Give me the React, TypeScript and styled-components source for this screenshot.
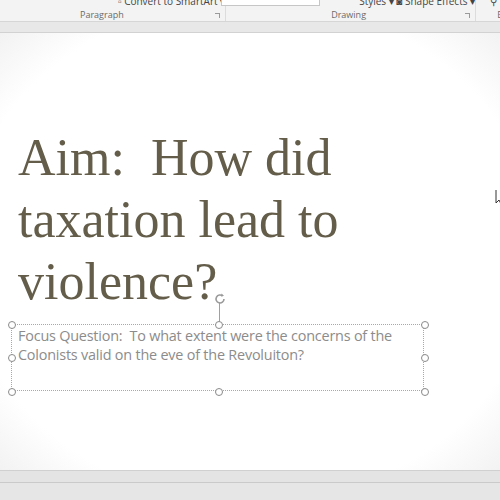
import React from 'react';
import styled, { createGlobalStyle } from 'styled-components';

const GlobalStyle = createGlobalStyle`
    html, body {
        margin: 0;
        padding: 0;
        width: 500px;
        height: 500px;
        overflow: hidden;
        background: #e6e6e6;
    }
`;

const Screen = styled.div`
    width: 500px;
    height: 500px;
    display: grid;
    grid-template-rows: 22px 11px 1fr 13px 17px;
    font-family: 'Open Sans', 'Liberation Sans', sans-serif;
`;

const Ribbon = styled.div`
    display: flex;
    background: #f3f3f3;
    border-bottom: 1px solid #d6d6d6;
    overflow: hidden;
`;

const RibbonGroup = styled.div<{ $width: number; $pad: number }>`
    flex: 0 0 ${(p) => p.$width}px;
    display: flex;
    flex-direction: column;
    justify-content: space-between;
    padding-left: ${(p) => p.$pad}px;
    box-sizing: border-box;
    border-right: 1px solid #dcdcdc;
`;

const ToolRow = styled.div`
    display: flex;
    align-items: flex-start;
    gap: 6px;
    height: 6px;
    margin-top: -2px;
    font-size: 10px;
    line-height: 6px;
    color: #444;
    white-space: nowrap;
`;

const Gallery = styled.div`
    width: 97px;
    height: 7px;
    margin-top: -1px;
    margin-left: -110px;
    margin-right: 33px;
    background: #fff;
    border: 1px solid #c6c6c6;
`;

const LabelRow = styled.div`
    display: flex;
    align-items: center;
    justify-content: space-between;
    height: 12px;
    padding: 0 5px 1px 0;
    font-size: 9px;
    color: #6a6a6a;
    white-space: nowrap;
`;

const Launcher = styled.span`
    width: 4px;
    height: 4px;
    border-top: 1px solid #9a9a9a;
    border-right: 1px solid #9a9a9a;
    margin-top: 2px;
`;

const RibbonGap = styled.div`
    background: #e8e8e8;
    border-bottom: 1px solid #d2d2d2;
`;

const Slide = styled.div`
    position: relative;
    display: flex;
    flex-direction: column;
    align-items: flex-start;
    background: radial-gradient(ellipse 72% 72% at 50% 50%, #ffffff 80%, #f1f1f1 100%);
    overflow: hidden;
`;

const Title = styled.h1`
    margin: 0;
    padding: 94px 0 0 18px;
    font-family: 'Liberation Serif', 'DejaVu Serif', serif;
    font-weight: normal;
    font-size: 52px;
    line-height: 62px;
    color: #635d4a;
`;

const TextBox = styled.div`
    position: relative;
    margin: 11px 0 0 11px;
    width: 413px;
    height: 67px;
    border: 1px dotted #a8a8a8;
    box-sizing: border-box;
`;

const FocusText = styled.p`
    margin: 0;
    padding: 1px 0 0 6px;
    font-family: 'Open Sans', 'Liberation Sans', sans-serif;
    font-size: 14.4px;
    line-height: 19px;
    color: #8c8c8c;
    letter-spacing: -0.2px;
`;

const Handle = styled.div<{ $x: number; $y: number }>`
    position: absolute;
    left: ${(p) => p.$x - 4}px;
    top: ${(p) => p.$y - 4}px;
    width: 6px;
    height: 6px;
    border: 1px solid #8a8a8a;
    border-radius: 50%;
    background: #fff;
`;

const Stem = styled.div`
    position: absolute;
    left: 207px;
    top: -22px;
    width: 1px;
    height: 22px;
    background: #a0a0a0;
`;

const Rotate = styled.svg`
    position: absolute;
    left: 201px;
    top: -33px;
`;

const Cursor = styled.svg`
    position: absolute;
    right: -3px;
    top: 156px;
`;

const StatusGap = styled.div`
    background: #e4e4e4;
    border-top: 1px solid #d0d0d0;
    border-bottom: 1px solid #cacaca;
`;

const StatusBar = styled.div`
    background: #e6e6e6;
`;

const handles: [number, number][] = [
    [0, 0], [207, 0], [413, 0],
    [0, 33], [413, 33],
    [0, 67], [207, 67], [413, 67],
];

export default function App() {
    return (
        <>
            <GlobalStyle />
            <Screen>
                <Ribbon>
                    <RibbonGroup $width={218} $pad={80}>
                        <ToolRow>
                            <span style={{ marginLeft: 38 }}>▫ Convert to SmartArt ▾</span>
                        </ToolRow>
                        <LabelRow>
                            Paragraph
                            <Launcher />
                        </LabelRow>
                    </RibbonGroup>
                    <RibbonGroup $width={250} $pad={105}>
                        <ToolRow>
                            <Gallery />
                            <span>Styles ▾ ◙ Shape Effects ▾</span>
                        </ToolRow>
                        <LabelRow>
                            Drawing
                            <Launcher />
                        </LabelRow>
                    </RibbonGroup>
                    <RibbonGroup $width={60} $pad={14}>
                        <ToolRow>⚲ Sel</ToolRow>
                        <LabelRow style={{ paddingLeft: 7 }}>Edi</LabelRow>
                    </RibbonGroup>
                </Ribbon>
                <RibbonGap />
                <Slide>
                    <Title>
                        Aim:&nbsp; How did
                        <br />
                        taxation lead to
                        <br />
                        violence?
                    </Title>
                    <TextBox>
                        <Stem />
                        <Rotate width="14" height="14" viewBox="0 0 14 14">
                            <path
                                d="M11 7a4 4 0 1 1-1.3-3"
                                fill="none"
                                stroke="#9a9a9a"
                                strokeWidth="1.6"
                            />
                            <path d="M8.5 1.5l2.5 2.2-3 0.8z" fill="#9a9a9a" />
                        </Rotate>
                        <FocusText>
                            Focus Question:&nbsp; To what extent were the concerns of the
                            <br />
                            Colonists valid on the eve of the Revoluiton?
                        </FocusText>
                        {handles.map(([x, y]) => (
                            <Handle key={`${x}-${y}`} $x={x} $y={y} />
                        ))}
                    </TextBox>
                    <Cursor width="8" height="16" viewBox="0 0 8 16">
                        <path d="M1 1v13l3-3 2 4" fill="#fff" stroke="#333" strokeWidth="1" />
                    </Cursor>
                </Slide>
                <StatusGap />
                <StatusBar />
            </Screen>
        </>
    );
}
